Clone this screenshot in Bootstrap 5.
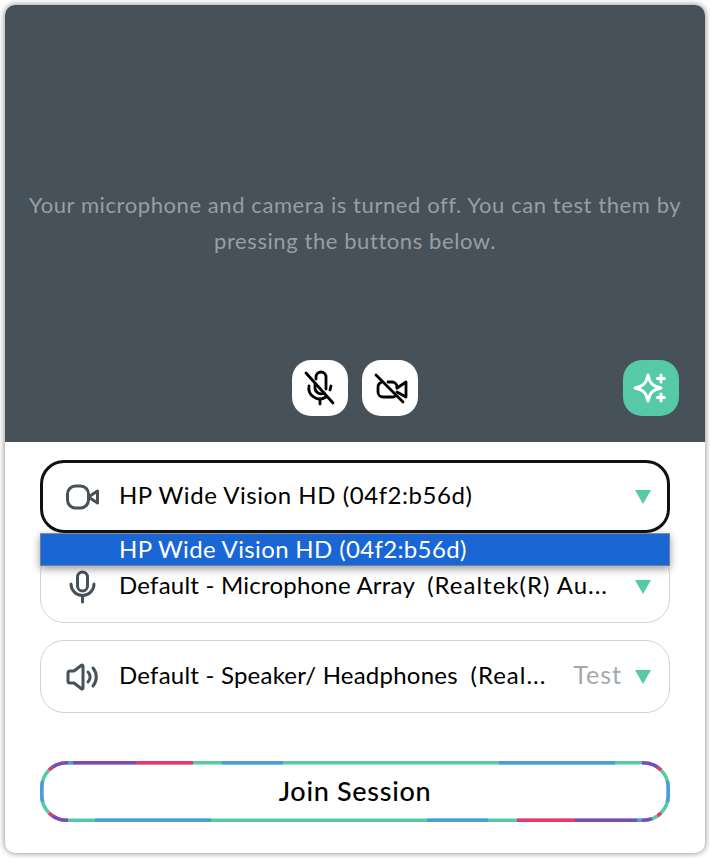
<!DOCTYPE html>
<html lang="en">
<head>
  <meta charset="UTF-8">
  <title>Join Session</title>
  <meta name="viewport" content="width=device-width, initial-scale=1">
  <link href="https://cdn.jsdelivr.net/npm/bootstrap@5.3.0/dist/css/bootstrap.min.css" rel="stylesheet">
  <style>
    body { background-color: #fff; padding: 5px; font-family: "Lato", "Liberation Sans", sans-serif; color: #000; }
    .setup-card { height: 848px; border-radius: 10px; overflow: hidden; box-shadow: 0 0 6px rgba(0,0,0,.5); background: #fff; }
    .preview { height: 437px; background: #475159; padding: 182px 26px 26px; }
    .preview-msg { font-size: 22px; line-height: 36px; color: #989ea2; text-align: center; margin: 0 -6px; letter-spacing: .58px; }
    .preview-controls { display: grid; grid-template-columns: 1fr auto 1fr; margin-top: auto; }
    .btn-group-main { gap: 14px; }
    .round-btn { width: 56px; height: 56px; border-radius: 19px; border: 0; padding: 0; background: #fff; display: flex; align-items: center; justify-content: center; }
    .round-btn.accent { background: #56c9a6; }
    .devices { padding: 18px 35px 0; }
    .device-row { height: 73px; border: 1px solid #d2d2d2; border-radius: 24px; padding: 0 18px 0 25px; font-size: 24px; white-space: nowrap; letter-spacing: .22px; margin-bottom: 17px; }
    .device-row.active { border: 3px solid #111; padding: 0 16px 0 23px; letter-spacing: .55px; }
    .device-icon { width: 34px; flex: none; margin-right: 19px; }
    .device-name { min-width: 0; overflow: hidden; padding-bottom: 4px; }
    .device-detail { letter-spacing: 1px; }
    .test-link { color: #a5a8aa; margin-left: auto; padding: 0 0 4px 12px; font-size: 25px; letter-spacing: 1px; }
    .select-caret { flex: none; margin-left: auto; width: 0; height: 0; border-left: 8px solid transparent; border-right: 8px solid transparent; border-top: 14px solid #56c9a6; }
    .test-link + .select-caret { margin-left: 13px; }
    .device-menu { top: 91px; left: 35px; width: 630px; height: 33px; background: #1a66d4; color: #fff; font-size: 24px; line-height: 29px; padding-left: 78px; letter-spacing: .35px; border: 1px solid #6f7f95; border-top-color: #8a8f96; box-shadow: 0 3px 8px rgba(0,0,0,.4); }
    .join-wrap { width: 630px; height: 61px; margin-top: 48px; }
    .join-btn { width: 100%; height: 100%; border: 0; background: #fff; font-size: 27px; font-weight: 500; letter-spacing: .7px; padding: 0; }
    .join-ring { top: 0; left: 0; pointer-events: none; }
  </style>
</head>
<body>
  <div class="setup-card">
    <div class="preview d-flex flex-column">
      <p class="preview-msg mb-0">Your microphone and camera is turned off. You can test them by pressing the buttons below.</p>
      <div class="preview-controls">
        <div></div>
        <div class="d-flex btn-group-main">
          <button class="round-btn" type="button" aria-label="Microphone off">
            <svg width="34" height="36" viewBox="0 0 34 36" fill="none" stroke="#000" stroke-width="2.8" stroke-linecap="round" stroke-linejoin="round">
              <path d="M13 9V7a5 5 0 0 1 10 0v12"/><path d="M12 14v4a6 6 0 0 0 9 5"/>
              <path d="M6 16a11 11 0 0 0 17 11"/><path d="M28 16l-1 4"/><path d="M17 29v5"/><path d="M3 3l27 30"/>
            </svg>
          </button>
          <button class="round-btn" type="button" aria-label="Camera off">
            <svg width="38" height="34" viewBox="0 0 38 34" fill="none" stroke="#000" stroke-width="2.8" stroke-linecap="round" stroke-linejoin="round">
              <path d="M10 11.500a5 5 0 0 0-3 4.500v5a5 5 0 0 0 5 5h10a4 4 0 0 0 3-1.500"/><path d="M17 11h4a5 5 0 0 1 5 5v1"/>
              <path d="M26 17l9-6v15l-9-5"/><path d="M5 4l27 27"/>
            </svg>
          </button>
        </div>
        <div class="d-flex justify-content-end">
          <button class="round-btn accent" type="button" aria-label="Effects">
            <svg width="36" height="36" viewBox="0 0 36 36" fill="none" stroke="#fff" stroke-width="3" stroke-linecap="round" stroke-linejoin="round">
              <path d="M15 5c1.500 8 5 11.500 13 13-8 1.500-11.500 5-13 13-1.500-8-5-11.500-13-13 8-1.500 11.500-5 13-13z"/>
              <path d="M28 5v7M24.500 8.500h7"/><path d="M28 24v7M24.500 27.500h7"/>
            </svg>
          </button>
        </div>
      </div>
    </div>

    <div class="devices position-relative">
      <div class="device-row active d-flex align-items-center">
        <svg class="device-icon" height="26" viewBox="0 0 34 26" fill="none" stroke="#475159" stroke-width="3" stroke-linejoin="round">
          <rect x="1.500" y="2" width="21" height="22" rx="8"/><path d="M22.500 13l9-6v12z"/>
        </svg>
        <span class="device-name">HP Wide Vision HD (04f2:b56d)</span>
        <span class="select-caret"></span>
      </div>
      <div class="device-menu position-absolute">HP Wide Vision HD (04f2:b56d)</div>
      <div class="device-row d-flex align-items-center">
        <svg class="device-icon" height="34" viewBox="0 0 34 34" fill="none" stroke="#475159" stroke-width="3" stroke-linecap="round">
          <rect x="11.500" y="2" width="10" height="19" rx="5"/><path d="M5 14a11.500 11.500 0 0 0 23 0"/><path d="M16.500 26v6"/>
        </svg>
        <span class="device-name">Default - Microphone Array&nbsp; <span class="device-detail">(Realtek(R) Au...</span></span>
        <span class="select-caret"></span>
      </div>
      <div class="device-row d-flex align-items-center">
        <svg class="device-icon" height="30" viewBox="0 0 34 30" fill="none" stroke="#475159" stroke-width="3" stroke-linecap="round" stroke-linejoin="round">
          <path d="M17 4v22a1 1 0 0 1-1.600.8L8 21H4a2 2 0 0 1-2-2V11a2 2 0 0 1 2-2h4l7.400-5.800A1 1 0 0 1 17 4z"/><path d="M22 10a7 7 0 0 1 0 10"/><path d="M27 6a14 14 0 0 1 0 18"/>
        </svg>
        <span class="device-name">Default - Speaker/ Headphones&nbsp; <span class="device-detail">(Real...</span></span>
        <span class="test-link">Test</span>
        <span class="select-caret"></span>
      </div>
      <div class="position-relative join-wrap">
        <button class="join-btn" type="button">Join Session</button>
        <svg class="join-ring position-absolute" width="630" height="61" viewBox="0 0 630 61" fill="none" stroke-width="3.5">
          <rect x="1.750" y="1.750" width="626.500" height="57.500" rx="25" stroke="#56c9a6"/>
          <g stroke="#4a9be0">
            <path d="M28 1.750H33M182 1.750H243M459 1.750H575"/>
            <path d="M55 59.250H171M387 59.250H448M597 59.250H602"/>
            <path d="M2.670 20A25 25 0 0 0 1.750 26.750V34.250A25 25 0 0 0 2.670 41"/>
            <path d="M627.330 20A25 25 0 0 1 628.250 26.750V34.250A25 25 0 0 1 627.330 41"/>
          </g>
          <g stroke="#7f49bd">
            <path d="M12.400 6.270A25 25 0 0 1 26.750 1.750H28M33 1.750H96"/>
            <path d="M12.400 54.730A25 25 0 0 0 26.750 59.250H28"/>
            <path d="M535 59.250H597M602 59.250H603.250A25 25 0 0 0 612 57.700"/>
            <path d="M602 1.750H603.250A25 25 0 0 1 617.600 6.270"/>
          </g>
          <g stroke="#ee3668">
            <path d="M96 1.750H153M477 59.250H535"/>
            <path d="M9.070 9.070A25 25 0 0 1 12.400 6.270"/>
            <path d="M9.070 51.930A25 25 0 0 0 12.400 54.730"/>
            <path d="M617.600 6.270A25 25 0 0 1 620.930 9.070"/>
            <path d="M617.600 54.730A25 25 0 0 0 620.930 51.930"/>
          </g>
        </svg>
      </div>
    </div>
  </div>
  <script src="https://cdn.jsdelivr.net/npm/bootstrap@5.3.0/dist/js/bootstrap.bundle.min.js"></script>
</body>
</html>
